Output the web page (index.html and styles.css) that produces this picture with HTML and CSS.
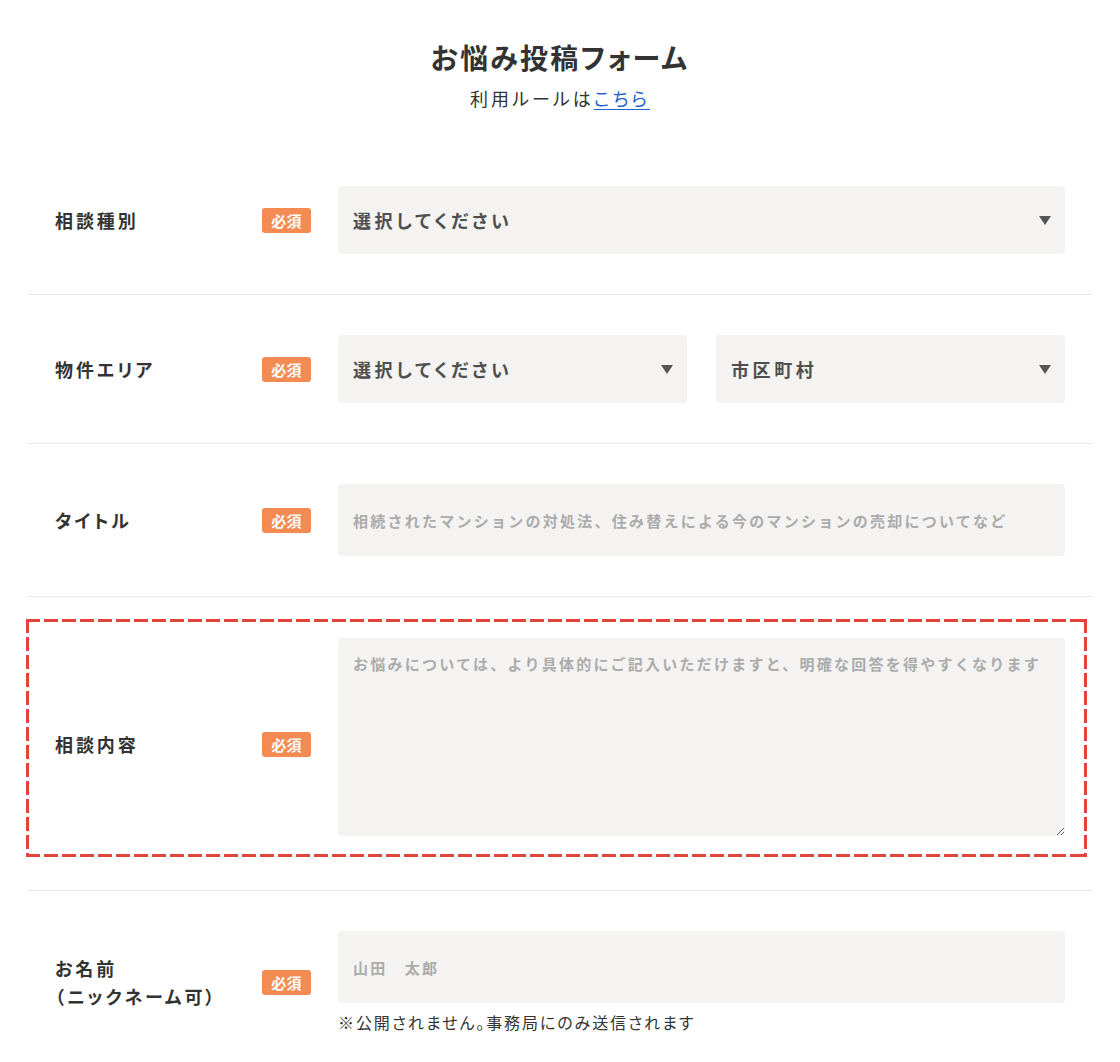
FILE: index.html
```html
<!DOCTYPE html>
<html lang="ja">
<head>
<meta charset="utf-8">
<title>お悩み投稿フォーム</title>
<link rel="stylesheet" href="styles.css">
</head>
<body>
<main class="page">
  <header class="head">
    <h1 class="title">お悩み投稿フォーム</h1>
    <p class="sub">利用ルールは<a class="link" href="#">こちら</a></p>
  </header>

  <form class="form">
    <div class="row">
      <div class="label">相談種別</div>
      <span class="badge">必須</span>
      <div class="field">
        <div class="select-wrap">
          <select class="select"><option>選択してください</option></select>
        </div>
      </div>
    </div>

    <div class="row">
      <div class="label">物件エリア</div>
      <span class="badge">必須</span>
      <div class="field field-split">
        <div class="select-wrap">
          <select class="select"><option>選択してください</option></select>
        </div>
        <div class="select-wrap">
          <select class="select"><option>市区町村</option></select>
        </div>
      </div>
    </div>

    <div class="row">
      <div class="label">タイトル</div>
      <span class="badge">必須</span>
      <div class="field">
        <input class="input" type="text" placeholder="相続されたマンションの対処法、住み替えによる今のマンションの売却についてなど">
      </div>
    </div>

    <div class="row row-hl">
      <div class="hl">
        <div class="label">相談内容</div>
        <span class="badge">必須</span>
        <div class="field">
          <textarea class="textarea" placeholder="お悩みについては、より具体的にご記入いただけますと、明確な回答を得やすくなります"></textarea>
        </div>
      </div>
    </div>

    <div class="row row-last">
      <div class="label">お名前<br>（ニックネーム可）</div>
      <span class="badge">必須</span>
      <div class="field">
        <input class="input" type="text" placeholder="山田　太郎">
        <p class="note">※公開されません。事務局にのみ送信されます</p>
      </div>
    </div>
  </form>
</main>
</body>
</html>
```

FILE: styles.css
```css
* { box-sizing: border-box; }

html, body {
  margin: 0;
  padding: 0;
  background: #fff;
}

body {
  font-family: "Noto Sans CJK JP", "Noto Sans", sans-serif;
  color: #333;
  font-feature-settings: "palt";
}

.page {
  width: 1064px;
  margin: 0 auto;
}

.head {
  padding-top: 38px;
  text-align: center;
  margin-bottom: 34px;
}

.title {
  margin: 0;
  font-size: 28px;
  line-height: 39px;
  font-weight: 700;
  letter-spacing: 0.08em;
  color: #333;
}

.sub {
  margin: 8px 0 0;
  font-size: 18px;
  line-height: 27px;
  letter-spacing: 0.17em;
  color: #333;
}

.link {
  color: #1f63d0;
  text-decoration: underline;
  text-underline-offset: 3px;
}

.form {
  display: flex;
  flex-direction: column;
}

.row {
  display: flex;
  align-items: center;
  padding: 40px 27px;
  border-bottom: 1px solid #e6e6e6;
}

.row-last {
  border-bottom: none;
  padding-bottom: 20px;
}

.label {
  width: 207px;
  flex: none;
  font-size: 18px;
  line-height: 28px;
  font-weight: 700;
  letter-spacing: 0.16em;
  color: #333;
}

.badge {
  flex: none;
  width: 49px;
  height: 25px;
  margin-right: 27px;
  border-radius: 3px;
  background: #f38b52;
  color: #fff;
  font-size: 15px;
  font-weight: 700;
  line-height: 25px;
  text-align: center;
  letter-spacing: 0.02em;
}

.field {
  flex: 1;
  min-width: 0;
}

.field-split {
  display: flex;
  gap: 29px;
}

.field-split .select-wrap {
  flex: 1;
}

.select-wrap {
  position: relative;
}

.select-wrap::after {
  content: "";
  position: absolute;
  right: 14px;
  top: 50%;
  margin-top: -4px;
  border-left: 6px solid transparent;
  border-right: 6px solid transparent;
  border-top: 9px solid #555;
  pointer-events: none;
}

.select {
  display: block;
  width: 100%;
  height: 68px;
  margin: 0;
  padding: 0 40px 0 15px;
  border: none;
  border-radius: 4px;
  background: #f4f3f1;
  appearance: none;
  -webkit-appearance: none;
  font-family: inherit;
  font-size: 18px;
  font-weight: 700;
  letter-spacing: 0.2em;
  color: #4f4f4f;
  font-feature-settings: "palt";
}

.input {
  display: block;
  width: 100%;
  height: 72px;
  margin: 0;
  padding: 0 15px;
  border: none;
  border-radius: 4px;
  background: #f4f3f1;
  font-family: inherit;
  font-size: 15px;
  font-weight: 700;
  letter-spacing: 0.15em;
  color: #333;
  outline: none;
}

.input::placeholder,
.textarea::placeholder {
  color: #ababab;
  opacity: 1;
}

.row-hl {
  display: block;
  padding: 22px 0 33px;
}

.hl {
  display: flex;
  align-items: center;
  margin: 0 5px 0 -2px;
  padding: 19px 22px 7px 29px;
  background:
    repeating-linear-gradient(90deg, #e0443a 0 14px, transparent 14px 18px) top left / 100% 3px no-repeat,
    repeating-linear-gradient(90deg, #e0443a 0 14px, transparent 14px 18px) bottom left / 100% 3px no-repeat,
    repeating-linear-gradient(180deg, #e0443a 0 14px, transparent 14px 18px) top left / 3px 100% no-repeat,
    repeating-linear-gradient(180deg, #e0443a 0 14px, transparent 14px 18px) top right / 3px 100% no-repeat;
}

.textarea {
  display: block;
  width: 100%;
  height: 198px;
  margin: 0 0 14px;
  padding: 14px 15px;
  border: none;
  border-radius: 4px;
  background: #f4f3f1;
  font-family: inherit;
  font-size: 15px;
  line-height: 24px;
  font-weight: 700;
  letter-spacing: 0.15em;
  color: #333;
  resize: vertical;
  outline: none;
}

.note {
  margin: 8px 0 0;
  font-size: 16px;
  line-height: 22px;
  letter-spacing: 0.12em;
  color: #333;
}
```
